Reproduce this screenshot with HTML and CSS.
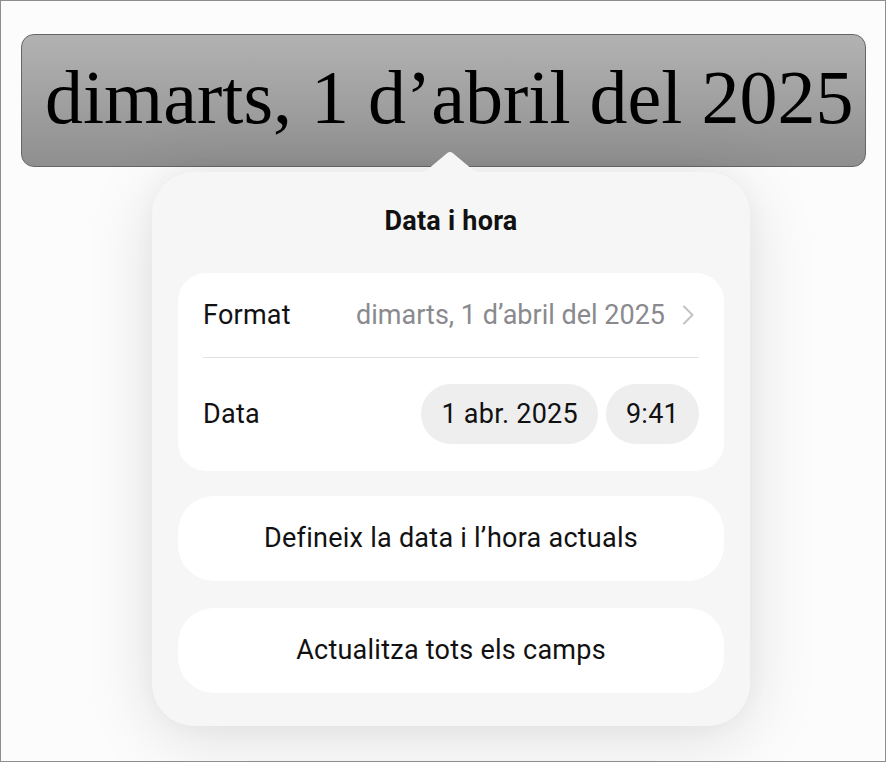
FILE: index.html
```html
<!DOCTYPE html>
<html lang="ca">
<head>
<meta charset="utf-8">
<title>Data i hora</title>
<link rel="stylesheet" href="styles.css">
</head>
<body>
<div class="frame">
  <div class="field">dimarts, 1 d’abril del 2025</div>
  <div class="popover">
    <svg class="arrow" width="60" height="23" viewBox="0 0 60 23" aria-hidden="true">
      <path d="M0 23 L0 22 C5 22 7.5 20 10 17.5 L27 3.2 Q30 0.6 33 3.2 L50 17.5 C52.5 20 55 22 60 22 L60 23 Z" fill="#f6f6f6"/>
    </svg>
    <div class="title">Data i hora</div>
    <div class="card">
      <div class="row row-format">
        <span class="label">Format</span>
        <span class="value">dimarts, 1 d’abril del 2025</span>
        <svg class="chev" width="16" height="20" viewBox="0 0 16 20" aria-hidden="true">
          <path d="M3 1.5 L11.5 10 L3 18.5" fill="none" stroke="#c2c2c4" stroke-width="2" stroke-linecap="round" stroke-linejoin="round"/>
        </svg>
      </div>
      <div class="sep"></div>
      <div class="row row-date">
        <span class="label">Data</span>
        <span class="pill">1 abr. 2025</span>
        <span class="pill">9:41</span>
      </div>
    </div>
    <div class="btn">Defineix la data i l’hora actuals</div>
    <div class="btn">Actualitza tots els camps</div>
  </div>
</div>
</body>
</html>
```
FILE: styles.css
```css
html, body {
  margin: 0;
  padding: 0;
  background: #ffffff;
}
.frame {
  box-sizing: border-box;
  width: 886px;
  height: 762px;
  border: 1px solid #8e8e8e;
  background: #fcfcfc;
  overflow: hidden;
  display: flex;
  flex-direction: column;
  font-family: Roboto, "Liberation Sans", sans-serif;
  color: #111;
}
.field {
  box-sizing: border-box;
  margin: 33px 0 0 20px;
  width: 845px;
  height: 133px;
  border: 1px solid #666;
  border-radius: 13px;
  background: linear-gradient(#b2b2b2, #8f8f8f);
  font-family: "Liberation Serif", "Times New Roman", serif;
  font-size: 76px;
  line-height: 76px;
  padding: 24px 0 0 23px;
  color: #000;
  white-space: nowrap;
}
.popover {
  position: relative;
  box-sizing: border-box;
  margin: 5px 0 0 151px;
  width: 598px;
  height: 554px;
  background: #f6f6f6;
  border-radius: 42px;
  box-shadow: 0 12px 70px rgba(0, 0, 0, 0.12), 0 0 24px rgba(0, 0, 0, 0.03);
  padding: 36px 26px 0;
  display: flex;
  flex-direction: column;
  letter-spacing: 0.25px;
}
.arrow {
  position: absolute;
  top: -22px;
  left: 268px;
  display: block;
}
.title {
  text-align: center;
  font-weight: 700;
  font-size: 27px;
  line-height: 26px;
  color: #111;
}
.card {
  margin-top: 39px;
  background: #fff;
  border-radius: 28px;
  padding: 0 25px;
}
.row {
  display: flex;
  align-items: center;
  font-size: 27px;
}
.row-format {
  height: 84px;
}
.label {
  flex: 1;
  color: #111;
}
.value {
  color: #8a8a8e;
  letter-spacing: 0;
}
.chev {
  display: block;
  margin-left: 16px;
  margin-right: 2px;
}
.sep {
  height: 1px;
  background: #e2e2e4;
}
.row-date {
  padding: 26px 0 27px;
  gap: 8px;
}
.pill {
  height: 60px;
  line-height: 60px;
  padding: 0 20px;
  border-radius: 30px;
  background: #eeeeef;
  color: #111;
}
.btn {
  height: 85px;
  line-height: 85px;
  background: #fff;
  border-radius: 36px;
  text-align: center;
  font-size: 27px;
  color: #111;
  margin-top: 25px;
}
.btn + .btn {
  margin-top: 27px;
}
```
